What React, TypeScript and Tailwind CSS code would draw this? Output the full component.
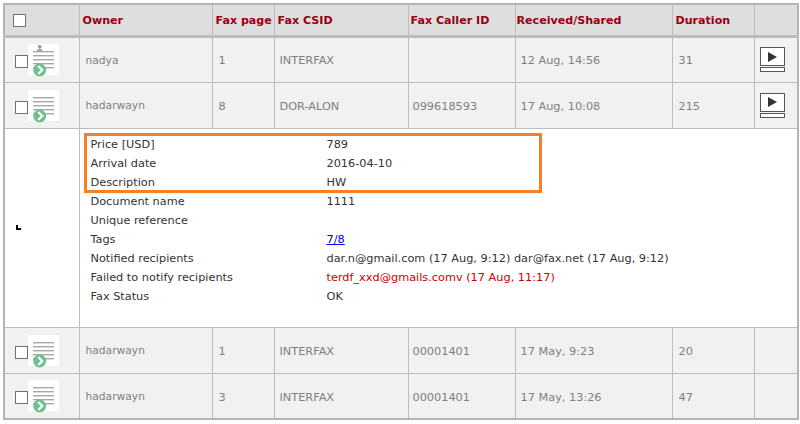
const cols = ['w-[75px]', 'w-[133px]', 'w-[62px]', 'w-[134px]', 'w-[107px]', 'w-[157px]', 'w-[82px]', 'w-[44px]'];

const FaxIcon = ({ person }: { person?: boolean }) => (
  <svg width="31" height="33" viewBox="0 0 31 33" className="mt-[2px] block">
    <rect x="0" y="0" width="31" height="31" fill="#fff" />
    {person && (
      <>
        <circle cx="11.7" cy="2.7" r="2" fill="#a0a0a0" />
        <path d="M8.5 8 Q8.5 5 11.7 5 Q15 5 15 8 Z" fill="#a0a0a0" />
      </>
    )}
    {[7, 11, 15, 19, 23].map((y) => (
      <rect key={y} x="5" y={y} width="21" height="1.4" fill="#a8a8a8" />
    ))}
    <circle cx="11.7" cy="26" r="6.5" fill="#6fc08f" />
    <path d="M10.2 22 L14.2 26 L10.2 30" fill="none" stroke="#fff" strokeWidth="2.4" />
  </svg>
);

const PlayIcon = () => (
  <div className="flex flex-col items-start">
    <div className="flex h-[19px] w-[25px] items-center justify-center border border-[#555] bg-white">
      <svg width="9" height="10" viewBox="0 0 9 10">
        <path d="M0 0 L9 5 L0 10 Z" fill="#333" />
      </svg>
    </div>
    <div className="mt-[1px] h-[5px] w-[25px] border border-[#555] bg-white" />
  </div>
);

const Box = ({ big }: { big?: boolean }) => (
  <div className={`h-[13px] w-[13px] border border-[#707070] bg-white ${big ? 'ml-[8px]' : 'ml-[10px] mt-[4px]'}`} />
);

type Row = {
  owner: string;
  page: string;
  csid: string;
  caller: string;
  received: string;
  duration: string;
  person?: boolean;
  play?: boolean;
};

const FaxRow = ({ row }: { row: Row }) => {
  const td = 'border border-[#bdbdbd] pt-[3px] align-middle';
  return (
    <tr className="h-[46px] bg-[#f1f1f1] text-[#808080]">
      <td className="border border-[#bdbdbd] align-middle">
        <div className="flex items-center">
          <Box />
          <FaxIcon person={row.person} />
        </div>
      </td>
      <td className={`${td} pl-[6px] text-[10.7px]`}>{row.owner}</td>
      <td className={`${td} pl-[6px]`}>{row.page}</td>
      <td className={`${td} pl-[5px]`}>{row.csid}</td>
      <td className={`${td} pl-[4px]`}>{row.caller}</td>
      <td className={`${td} pl-[5px]`}>{row.received}</td>
      <td className={`${td} pl-[6px]`}>{row.duration}</td>
      <td className="border border-[#bdbdbd] align-middle">{row.play && <div className="ml-[5px]"><PlayIcon /></div>}</td>
    </tr>
  );
};

const details: [string, React.ReactNode][] = [
  ['Document name', '1111'],
  ['Unique reference', ''],
  ['Tags', <a className="text-[#0000ee] underline">7/8</a>],
  ['Notified recipients', 'dar.n@gmail.com (17 Aug, 9:12) dar@fax.net (17 Aug, 9:12)'],
  ['Failed to notify recipients', <span className="text-[#cc0000]">terdf_xxd@gmails.comv (17 Aug, 11:17)</span>],
  ['Fax Status', 'OK'],
];

const DetailLine = ({ label, value }: { label: string; value: React.ReactNode }) => (
  <div className="flex h-[19px] shrink-0 items-center">
    <div className="w-[236px] shrink-0">{label}</div>
    <div>{value}</div>
  </div>
);

const heads = [
  { label: 'Owner', pad: 'pl-[3px]' },
  { label: 'Fax page', pad: 'pl-[3px]' },
  { label: 'Fax CSID', pad: 'pl-[3px]' },
  { label: 'Fax Caller ID', pad: 'pl-[2px]' },
  { label: 'Received/Shared', pad: 'pl-[1px]' },
  { label: 'Duration', pad: 'pl-[3px]' },
];

export default function App() {
  return (
    <div className="h-[424px] w-[800px] overflow-hidden bg-white pl-[3px] pt-[3px] font-['DejaVu_Sans',sans-serif] text-[11.3px] leading-none">
      <table className="w-[795px] table-fixed border-collapse border-2 border-[#b4b4b4]">
        <colgroup>
          {cols.map((c) => (
            <col key={c} className={c} />
          ))}
        </colgroup>
        <thead>
          <tr className="h-[32px] border-b-[3px] border-b-[#bdbdbd] bg-[#dedede]">
            <th className="border border-[#bdbdbd] pt-[2px] align-middle">
              <Box big />
            </th>
            {heads.map((h) => (
              <th key={h.label} className={`whitespace-nowrap border border-[#bdbdbd] pt-[2px] text-left align-middle text-[11.1px] font-bold text-[#990011] ${h.pad}`}>
                {h.label}
              </th>
            ))}
            <th className="border border-[#bdbdbd]" />
          </tr>
        </thead>
        <tbody>
          <FaxRow row={{ owner: 'nadya', page: '1', csid: 'INTERFAX', caller: '', received: '12 Aug, 14:56', duration: '31', person: true, play: true }} />
          <FaxRow row={{ owner: 'hadarwayn', page: '8', csid: 'DOR-ALON', caller: '099618593', received: '17 Aug, 10:08', duration: '215', play: true }} />
          <tr className="h-[199px] bg-white text-[#333]">
            <td className="border border-[#bdbdbd] align-middle">
              <svg width="6" height="5" viewBox="0 0 6 5" className="ml-[11px]">
                <path d="M0 0 H2 V3 H5 V5 H0 Z" fill="#000" />
              </svg>
            </td>
            <td colSpan={7} className="border border-[#bdbdbd] pl-[4px] align-top">
              <div className="h-[191px] pt-[4px]">
                <div className="flex h-[60px] w-[458px] flex-col justify-center border-[3px] border-[#f58026] pl-[4px] pt-[2px]">
                  <DetailLine label="Price [USD]" value="789" />
                  <DetailLine label="Arrival date" value="2016-04-10" />
                  <DetailLine label="Description" value="HW" />
                </div>
                <div className="pl-[7px]">
                  {details.map(([label, value]) => (
                    <DetailLine key={label} label={label} value={value} />
                  ))}
                </div>
              </div>
            </td>
          </tr>
          <FaxRow row={{ owner: 'hadarwayn', page: '1', csid: 'INTERFAX', caller: '00001401', received: '17 May, 9:23', duration: '20' }} />
          <FaxRow row={{ owner: 'hadarwayn', page: '3', csid: 'INTERFAX', caller: '00001401', received: '17 May, 13:26', duration: '47' }} />
        </tbody>
      </table>
    </div>
  );
}
